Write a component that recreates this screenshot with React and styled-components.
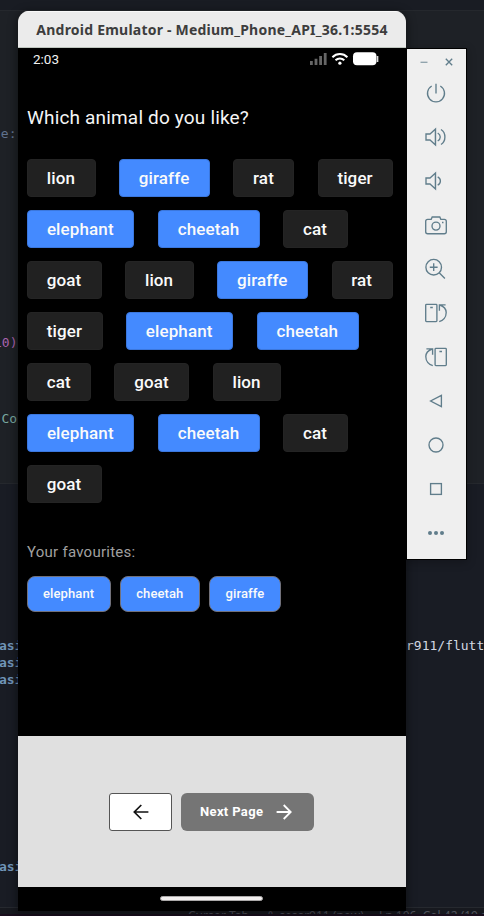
import React from "react";
import styled, { createGlobalStyle } from "styled-components";

const GlobalStyle = createGlobalStyle`
  * { box-sizing: border-box; }
  body { margin: 0; background: #191c24; overflow: hidden; }
`;

const Desktop = styled.div`
  position: relative;
  width: 484px;
  height: 916px;
  overflow: hidden;
  font-family: Roboto, sans-serif;
`;

/* Code editor behind the emulator */
const Editor = styled.div`
  display: grid;
  grid-template-rows: 10px 473px 424px 7px 2px;
  height: 916px;
  background: #191c24;
`;
const TabBar = styled.div`
  background: #191c23;
`;
const Pane = styled.div`
  display: flex;
  justify-content: space-between;
  overflow: hidden;
  border-top: 1px solid #25282d;
  background: ${(p) => p.$bg};
`;
const Strip = styled.div`
  width: ${(p) => p.$width}px;
  overflow: hidden;
  font: 13px/17px "DejaVu Sans Mono", monospace;
  white-space: pre;
`;
const CodeLine = styled.div`
  margin-top: ${(p) => p.$gap || 0}px;
  margin-left: ${(p) => p.$shift || 0}px;
  height: 17px;
  color: ${(p) => p.$color};
  font-weight: ${(p) => (p.$bold ? 700 : 400)};
`;
const StatusBar = styled.div`
  display: flex;
  border-top: 1px solid #26292f;
  padding-left: 188px;
  overflow: hidden;
  background: #17191f;
  color: #50525c;
  font: 12px/14px "Noto Sans", sans-serif;
  white-space: pre;
`;
const StatusItem = styled.span`
  flex: none;
  width: ${(p) => p.$width}px;
  margin-top: 1px;
`;
const Edge = styled.div`
  background: #190e1d;
`;

/* Emulator phone window */
const Phone = styled.div`
  position: absolute;
  left: 18px;
  top: 11px;
  width: 388px;
  height: 900px;
  display: flex;
  flex-direction: column;
  border-radius: 11px 11px 0 0;
  overflow: hidden;
  background: #000;
`;
const PhoneShadow = styled.div`
  position: absolute;
  left: 18px;
  top: 11px;
  width: 388px;
  height: 900px;
  border-radius: 11px 11px 0 0;
  box-shadow: 0 2px 9px 2px rgba(0, 0, 0, 0.38);
`;
const TitleBar = styled.div`
  height: 37px;
  flex: none;
  display: flex;
  align-items: center;
  justify-content: center;
  background: #ebebeb;
  border-top: 1px solid #f8f8f8;
  border-bottom: 1px solid #bfc6bf;
  color: #3d3d3d;
  font: 700 14px/20px "Noto Sans", sans-serif;
  letter-spacing: 0.22px;
  white-space: nowrap;
`;
const StatusRow = styled.div`
  height: 21px;
  flex: none;
  display: flex;
  justify-content: space-between;
  align-items: center;
  padding: 0 27px 0 15px;
`;
const Clock = styled.span`
  color: #f2f2f2;
  font-size: 13.5px;
  line-height: 20px;
`;
const Question = styled.h1`
  margin: 36px 0 0 9px;
  height: 26px;
  color: #f5f5f5;
  font-size: 19px;
  font-weight: 400;
  line-height: 26px;
  letter-spacing: 0.17px;
  white-space: nowrap;
`;
const Choices = styled.div`
  margin: 28.4px 0 0 9px;
  display: flex;
  flex-direction: column;
  gap: 13px;
`;
const ChoiceRow = styled.div`
  display: flex;
  gap: 23.3px;
`;
const Choice = styled.button`
  width: ${(p) => p.$width}px;
  height: 38px;
  padding: 0 0.8px 0 0;
  flex: none;
  border: 1px solid ${(p) => (p.$selected ? "#3b77dd" : "#242424")};
  border-radius: 4px;
  background: ${(p) => (p.$selected ? "#448aff" : "#212121")};
  color: #fafafa;
  font: 500 17px/36px Roboto, sans-serif;
  letter-spacing: 0.12px;
`;
const FavLabel = styled.div`
  margin: 37.6px 0 0 9px;
  height: 22px;
  color: #a0a0a0;
  font-size: 15px;
  line-height: 22px;
  letter-spacing: 0.25px;
`;
const Favourites = styled.div`
  display: flex;
  gap: 9px;
  margin: 13.5px 0 0 9px;
`;
const Favourite = styled.div`
  width: ${(p) => p.$width}px;
  height: 36px;
  padding-right: 0.8px;
  border: 1px solid #71717b;
  border-radius: 8px;
  background: #448aff;
  color: #fafafa;
  text-align: center;
  font: 500 13px/34px Roboto, sans-serif;
  letter-spacing: 0.1px;
`;
const Footer = styled.div`
  margin-top: auto;
  flex: none;
  height: 151px;
  display: flex;
  align-items: center;
  gap: 9px;
  padding-left: 91px;
  background: #e0e0e0;
`;
const BackButton = styled.button`
  display: grid;
  place-items: center;
  width: 63px;
  height: 38px;
  padding: 0;
  border: 1px solid #555;
  border-radius: 3px;
  background: #fff;
`;
const NextButton = styled.button`
  display: flex;
  align-items: center;
  justify-content: space-between;
  width: 133px;
  height: 38px;
  padding: 0 21px 0 19px;
  border: 0;
  border-radius: 6px;
  background: #757575;
  color: #fff;
  font: 700 13px/38px Roboto, sans-serif;
  letter-spacing: 0.35px;
`;
const NavBar = styled.div`
  height: 24px;
  flex: none;
  display: grid;
  place-items: center;
  padding-right: 1px;
  padding-bottom: 1px;
`;
const NavHandle = styled.div`
  width: 103px;
  height: 5px;
  border: 1px solid #aaa8a8;
  border-radius: 3px;
  background: #f1eeee;
`;

/* Emulator side toolbar */
const Toolbar = styled.div`
  position: absolute;
  left: 406px;
  top: 48px;
  width: 61px;
  height: 512px;
  display: flex;
  flex-direction: column;
  align-items: center;
  border: 1px solid #000;
  background: #efefef;
  color: #607d8b;
  box-shadow: 0 2px 8px 1px rgba(0, 0, 0, 0.22);
`;
const WindowControls = styled.div`
  display: flex;
  gap: 15px;
  height: 22px;
  padding-top: 8px;
  flex: none;
`;
const Tool = styled.div`
  display: grid;
  place-items: center;
  height: 44px;
  padding-right: 1px;
  flex: none;
`;
const Icon = styled.svg`
  display: block;
  fill: none;
  stroke: currentColor;
  stroke-width: ${(p) => p.$stroke || 1.35};
`;

const WIDTHS = {
  lion: 68.6, giraffe: 91.2, rat: 61, tiger: 75.6,
  elephant: 107.4, cheetah: 102.4, cat: 64.2, goat: 74.9,
};
const ROWS = [
  ["lion", "giraffe", "rat", "tiger"],
  ["elephant", "cheetah", "cat"],
  ["goat", "lion", "giraffe", "rat"],
  ["tiger", "elephant", "cheetah"],
  ["cat", "goat", "lion"],
  ["elephant", "cheetah", "cat"],
  ["goat"],
];
const FAVOURITES = [["elephant", 84], ["cheetah", 80.4], ["giraffe", 72]];
const SELECTED = FAVOURITES.map(([name]) => name);

const speaker = <path d="M2 9h4l5.5-5v16L6 15H2zM11.4 4v16" />;
const TOOLS = [
  <path key="power" d="M12 2.8v9.7M7.7 5a8.5 8.5 0 1 0 8.6 0" />,
  <g key="louder">{speaker}<path d="M13.7 8c3.4 2 3.4 6 0 8M17 4.5c5.2 3.3 5.2 11.7 0 15" /></g>,
  <g key="quieter">{speaker}<path d="M13.7 7.8c3.6 1.8 3.6 6.6 0 8.4" /></g>,
  <g key="camera">
    <path d="M3.7 6.3h3.5l1-2.3h7.6l1 2.3h3.5q2 0 2 2v10.4q0 2-2 2H3.7q-2 0-2-2V8.3q0-2 2-2z" />
    <circle cx="12" cy="13.1" r="4" /><path d="M18 9.5h1.5" />
  </g>,
  <g key="zoom"><circle cx="9.7" cy="10.2" r="7.8" /><path d="m15.2 15.7 5.7 5.8M5.8 10.2h7.8M9.7 6.3v7.8" /></g>,
  <g key="left"><rect x="1.7" y="3.4" width="11.2" height="17.2" rx=".8" /><path d="M6.2 6.5h2.6M15.2 20.6c3.8-1 7-4.4 7-9 0-3.8-2.7-6.3-6.4-7.6M15.4 9.8V3.8h6.2" /></g>,
  <g key="right"><rect x="11.1" y="3.4" width="11.2" height="17.2" rx=".8" /><path d="M15.4 6.5h2.6M8.8 20.6c-3.8-1-7-4.4-7-9 0-3.8 2.7-6.3 6.4-7.6M8.6 9.8V3.8H2.4" /></g>,
  <path key="back" d="M17.4 6.3v11.4L6.6 12z" />,
  <circle key="home" cx="12" cy="12" r="7" />,
  <rect key="overview" x="6.6" y="6.6" width="10.8" height="10.8" />,
  <g key="more" fill="currentColor" stroke="none"><circle cx="6" cy="12" r="2" /><circle cx="12" cy="12" r="2" /><circle cx="18" cy="12" r="2" /></g>,
];

export default function App() {
  return (
    <Desktop>
      <GlobalStyle />
      <Editor>
        <TabBar />
        <Pane $bg="#1e2126">
          <Strip $width={18}>
            <CodeLine $gap={114} $shift={-7} $color="#60728e">te:</CodeLine>
            <CodeLine $gap={192} $shift={-6} $color="#aa63af">10)</CodeLine>
            <CodeLine $gap={59} $shift={1.5} $color="#79a8a0">Co</CodeLine>
          </Strip>
        </Pane>
        <Pane $bg="#191c24">
          <Strip $width={18}>
            <CodeLine $gap={153} $shift={-1} $color="#7095b8" $bold>asi</CodeLine>
            <CodeLine $shift={-1} $color="#7095b8" $bold>asi</CodeLine>
            <CodeLine $shift={-1} $color="#7095b8" $bold>asi</CodeLine>
            <CodeLine $gap={170} $shift={-1} $color="#7095b8" $bold>asi</CodeLine>
          </Strip>
          <Strip $width={78}>
            <CodeLine $gap={153} $color="#d2d8e3">r911/flutt</CodeLine>
          </Strip>
        </Pane>
        <StatusBar>
          <StatusItem $width={77}>Cursor Tab</StatusItem>
          <StatusItem $width={114}>⚘ cesar911 (now)</StatusItem>
          <StatusItem $width={120}>Ln 106, Col 42 (19 s</StatusItem>
        </StatusBar>
        <Edge />
      </Editor>
      <PhoneShadow />
      <Toolbar>
        <WindowControls>
          <Icon width="10" height="10" viewBox="0 0 10 10" opacity=".65"><path d="M1.5 5.3h7" /></Icon>
          <Icon width="10" height="10" viewBox="0 0 10 10"><path d="m1.8 1.8 6.4 6.4m0-6.4L1.8 8.2" /></Icon>
        </WindowControls>
        {TOOLS.map((shape) => (
          <Tool key={shape.key}>
            <Icon width="24" height="24" viewBox="0 0 24 24">{shape}</Icon>
          </Tool>
        ))}
      </Toolbar>
      <Phone>
        <TitleBar>Android Emulator - Medium_Phone_API_36.1:5554</TitleBar>
        <StatusRow>
          <Clock>2:03</Clock>
          <Icon width="70" height="14" viewBox="0 0 70 14">
            <g stroke="#666" strokeWidth="2.8" strokeLinecap="butt">
              <path d="M2.4 9v4M7 6.7V13M11.6 4v9M16.2 1v12" />
            </g>
            <g stroke="#fff" strokeWidth="2">
              <path d="M23.4 5.2c4.2-4.2 10.8-4.2 15 0M26.5 8.3c2.5-2.4 6.3-2.4 8.8 0" />
              <circle cx="30.9" cy="11.2" r="1.6" fill="#fff" stroke="none" />
            </g>
            <rect x="44" y=".3" width="23.5" height="13" rx="4" fill="#fff" stroke="none" />
            <path d="M68.6 4v6" stroke="#ddd" strokeWidth="1.5" />
          </Icon>
        </StatusRow>
        <Question>Which animal do you like?</Question>
        <Choices>
          {ROWS.map((row, i) => (
            <ChoiceRow key={i}>
              {row.map((name) => (
                <Choice key={name} $width={WIDTHS[name]} $selected={SELECTED.includes(name)}>{name}</Choice>
              ))}
            </ChoiceRow>
          ))}
        </Choices>
        <FavLabel>Your favourites:</FavLabel>
        <Favourites>
          {FAVOURITES.map(([name, width]) => (
            <Favourite key={name} $width={width}>{name}</Favourite>
          ))}
        </Favourites>
        <Footer>
          <BackButton aria-label="Previous page">
            <Icon width="18" height="18" viewBox="0 0 18 18" color="#111" $stroke={1.7}><path d="M16.4 9H2.3M9.3 2 2.3 9l7 7" /></Icon>
          </BackButton>
          <NextButton>
            Next Page
            <Icon width="18" height="18" viewBox="0 0 18 18" $stroke={1.8}><path d="M1.6 9h14.1M8.7 2l7 7-7 7" /></Icon>
          </NextButton>
        </Footer>
        <NavBar><NavHandle /></NavBar>
      </Phone>
    </Desktop>
  );
}
